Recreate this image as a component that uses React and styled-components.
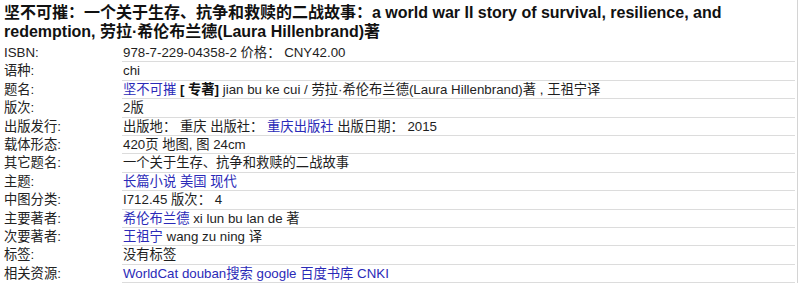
import React from "react";
import styled, { createGlobalStyle } from "styled-components";

const GlobalStyle = createGlobalStyle`
  html, body {
    margin: 0;
    padding: 0;
    background: #ffffff;
  }
  body {
    font-family: "Liberation Sans", Arial, "Noto Sans CJK SC", sans-serif;
    color: #1e1e1e;
  }
`;

const Record = styled.div`
  width: 797px;
  height: 283px;
  border-right: 1px solid #d4d4d4;
  display: flex;
  flex-direction: column;
  overflow: hidden;
`;

const Title = styled.h1`
  margin: 0;
  padding: 3px 4px 3px 4px;
  font-size: 16px;
  line-height: 19px;
  font-weight: bold;
  color: #111;
`;

const Fields = styled.div`
  display: flex;
  flex-direction: column;
`;

const Row = styled.div`
  display: grid;
  grid-template-columns: 122px 1fr;
  height: 18.4px;
  font-size: 13.3px;
`;

const Label = styled.div`
  padding-left: 4px;
  line-height: 17.4px;
  color: #222;
  white-space: nowrap;
`;

const Value = styled.div`
  margin-right: 2px;
  padding-left: 1px;
  line-height: 17.4px;
  border-bottom: 1px solid #dcdcdc;
  white-space: nowrap;
`;

const Link = styled.span`
  color: #2a2ab8;
`;

const Bold = styled.b`
  font-weight: bold;
  color: #111;
`;

const rows = [
  { label: "ISBN:", value: <>978-7-229-04358-2 价格： CNY42.00</> },
  { label: "语种:", value: <>chi</> },
  {
    label: "题名:",
    value: (
      <>
        <Link>坚不可摧</Link> <Bold>[ 专著]</Bold> jian bu ke cui / 劳拉·希伦布兰德(Laura Hillenbrand)著 , 王祖宁译
      </>
    ),
  },
  { label: "版次:", value: <>2版</> },
  {
    label: "出版发行:",
    value: (
      <>
        出版地： 重庆 出版社： <Link>重庆出版社</Link> 出版日期： 2015
      </>
    ),
  },
  { label: "载体形态:", value: <>420页 地图, 图 24cm</> },
  { label: "其它题名:", value: <>一个关于生存、抗争和救赎的二战故事</> },
  {
    label: "主题:",
    value: (
      <>
        <Link>长篇小说</Link> <Link>美国</Link> <Link>现代</Link>
      </>
    ),
  },
  { label: "中图分类:", value: <>I712.45 版次： 4</> },
  {
    label: "主要著者:",
    value: (
      <>
        <Link>希伦布兰德</Link> xi lun bu lan de 著
      </>
    ),
  },
  {
    label: "次要著者:",
    value: (
      <>
        <Link>王祖宁</Link> wang zu ning 译
      </>
    ),
  },
  { label: "标签:", value: <>没有标签</> },
  {
    label: "相关资源:",
    value: (
      <>
        <Link>WorldCat</Link> <Link>douban搜索</Link> <Link>google</Link> <Link>百度书库</Link> <Link>CNKI</Link>
      </>
    ),
  },
];

export default function App() {
  return (
    <>
      <GlobalStyle />
      <Record>
        <Title>
          坚不可摧：一个关于生存、抗争和救赎的二战故事：a world war II story of survival, resilience, and
          redemption, 劳拉·希伦布兰德(Laura Hillenbrand)著
        </Title>
        <Fields>
          {rows.map((r) => (
            <Row key={r.label}>
              <Label>{r.label}</Label>
              <Value>{r.value}</Value>
            </Row>
          ))}
        </Fields>
      </Record>
    </>
  );
}
